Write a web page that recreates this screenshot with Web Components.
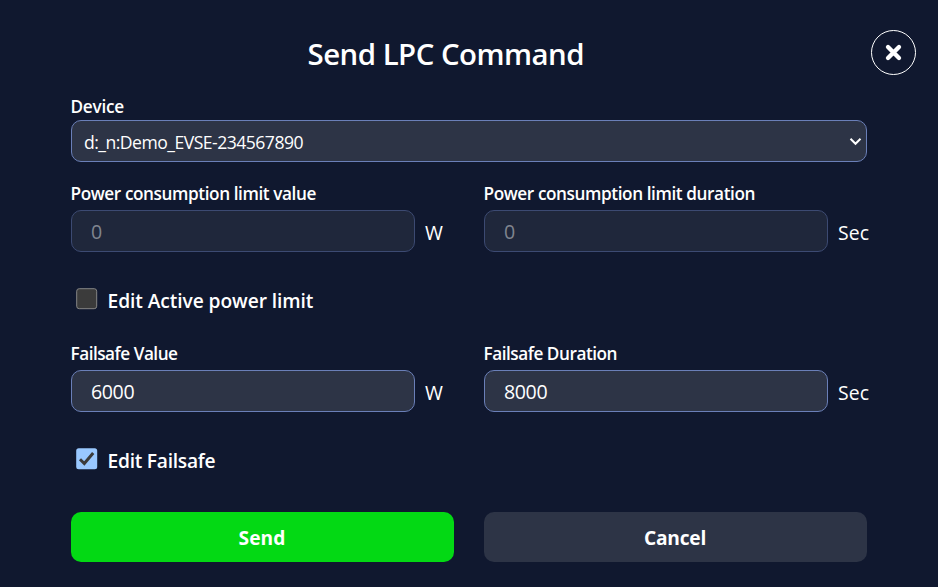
<!DOCTYPE html>
<html lang="en"><head><meta charset="utf-8"><title>Send LPC Command</title>
<style>
html,body{margin:0;height:100%;background:#10182f;color:#fff;font-family:"Open Sans","Noto Sans",sans-serif;overflow:hidden}
</style></head><body>
<lpc-dialog></lpc-dialog>
<script>
// Text run whose tracking is adjusted to a given advance width.
class FitText extends HTMLElement{
  connectedCallback(){
    const r=this.attachShadow({mode:'open'});
    r.innerHTML='<style>:host{display:inline-block;white-space:pre}span{display:inline-block}</style><span><slot></slot></span>';
    const s=r.querySelector('span'),n=this.textContent.length,w=+this.getAttribute('width');
    s.style.letterSpacing=((w-s.getBoundingClientRect().width)/n)+'px';
  }
}
class LpcSelect extends HTMLElement{
  connectedCallback(){
    this.attachShadow({mode:'open'}).innerHTML=`<style>
    :host{box-sizing:border-box;display:flex;align-items:center;justify-content:space-between;height:42px;border:1px solid #6a7fb8;border-radius:10px;background:#2d3446;padding:2px 4.5px 0 12px;font-size:17.6px;line-height:24px}
    svg{display:block;margin-top:-1px}</style><slot></slot>
    <svg width="13" height="9" viewBox="0 0 13 9"><path d="M1.5 1.8 6.5 6.8 11.5 1.8" fill="none" stroke="#fff" stroke-width="2"/></svg>`;
  }
}
class LpcField extends HTMLElement{
  connectedCallback(){
    const a=k=>this.getAttribute(k);
    this.attachShadow({mode:'open'}).innerHTML=`<style>
    :host{display:block}
    .label{height:30px;font-weight:650;font-size:17.2px;line-height:27px;margin-left:-.5px}
    .row{display:flex;align-items:center}
    .box{box-sizing:border-box;width:344px;height:42px;border:1px solid #6a7fb8;border-radius:10px;background:#2d3446;padding:0 19px;font-size:19.6px;line-height:41px}
    :host([disabled]) .box{background:#1f273b;border-color:#3c4a72;color:#7f858f}
    .unit{padding:2px 0 0 10.5px;font-size:19.4px;line-height:27px;white-space:nowrap;width:29px}
    </style><div class="label"><fit-text width="${a('label-width')}">${a('label')}</fit-text></div>
    <div class="row"><div class="box"><fit-text width="${a('value').length*10.8}">${a('value')}</fit-text></div><div class="unit"><fit-text width="${a('unit')==='W'?19:31}">${a('unit')}</fit-text></div></div>`;
  }
}
class LpcCheck extends HTMLElement{
  connectedCallback(){
    const on=this.hasAttribute('checked');
    this.attachShadow({mode:'open'}).innerHTML=`<style>
    :host{display:flex;align-items:center;padding-left:5px;height:28px;font-weight:650;font-size:19.2px;line-height:28px}
    svg{display:block;margin:-4px 9.5px 0 0}</style>
    <svg width="22" height="22" viewBox="0 0 22 22">${on
      ?'<rect x=".2" y=".2" width="21" height="21" rx="2.5" fill="#99c8ff"/><path d="M4 11.3 8.3 15.5 17.2 5" fill="none" stroke="#3b3b3b" stroke-width="3"/>'
      :'<rect x=".7" y=".7" width="20" height="20" rx="2.5" fill="#3b3b3b" stroke="#858585"/>'}</svg><slot></slot>`;
  }
}
class LpcButton extends HTMLElement{
  connectedCallback(){
    this.attachShadow({mode:'open'}).innerHTML=`<style>
    :host{display:flex;align-items:center;justify-content:center;height:50px;border-radius:10px;background:#2d3446;font-weight:700;font-size:19.2px;line-height:28px;box-sizing:border-box;padding:2px 1px 0 0}
    :host([primary]){background:#03d914}</style><slot></slot>`;
  }
}
class LpcDialog extends HTMLElement{
  connectedCallback(){
    this.attachShadow({mode:'open'}).innerHTML=`<style>
    :host{display:block;box-sizing:border-box;height:587px;padding:30px 22px 0 71px}
    header{display:grid;grid-template-columns:1fr 45px;height:63px}
    h1{margin:0;padding:3px 0 0 236.5px;font-size:29.4px;font-weight:640;line-height:42px}
    header svg{display:block}
    main{width:796px}
    .label{font-weight:650;font-size:17.2px;line-height:27px;height:27px;margin-left:-.5px}
    .pair{display:grid;grid-template-columns:383px 383px;column-gap:30px}
    .limits{margin-top:18px}.check{margin-top:35px}.safe{margin-top:25px}.actions{margin-top:37px}
    </style>
    <header><h1><fit-text width="276.5">Send LPC Command</fit-text></h1>
    <svg width="45" height="45" viewBox="0 0 45 45" fill="none" stroke="#fff"><circle cx="22.5" cy="22.5" r="22"/><path d="M17 17 28 28M28 17 17 28" stroke-width="4.3" stroke-linecap="round"/></svg></header>
    <main><div class="label"><fit-text width="53.5">Device</fit-text></div>
    <lpc-select><fit-text width="219">d:_n:Demo_EVSE-234567890</fit-text></lpc-select>
    <div class="pair limits"><lpc-field disabled label="Power consumption limit value" label-width="245.5" value="0" unit="W"></lpc-field>
    <lpc-field disabled label="Power consumption limit duration" label-width="271.5" value="0" unit="Sec"></lpc-field></div>
    <lpc-check class="check"><fit-text width="205.8">Edit Active power limit</fit-text></lpc-check>
    <div class="pair safe"><lpc-field label="Failsafe Value" label-width="107" value="6000" unit="W"></lpc-field>
    <lpc-field label="Failsafe Duration" label-width="133.5" value="8000" unit="Sec"></lpc-field></div>
    <lpc-check class="check" checked><fit-text width="107.8">Edit Failsafe</fit-text></lpc-check>
    <div class="pair actions"><lpc-button primary><fit-text width="47">Send</fit-text></lpc-button><lpc-button><fit-text width="62">Cancel</fit-text></lpc-button></div></main>`;
  }
}
customElements.define('lpc-select',LpcSelect);
customElements.define('lpc-field',LpcField);
customElements.define('lpc-check',LpcCheck);
customElements.define('lpc-button',LpcButton);
customElements.define('lpc-dialog',LpcDialog);
customElements.define('fit-text',FitText);
</script></body></html>
